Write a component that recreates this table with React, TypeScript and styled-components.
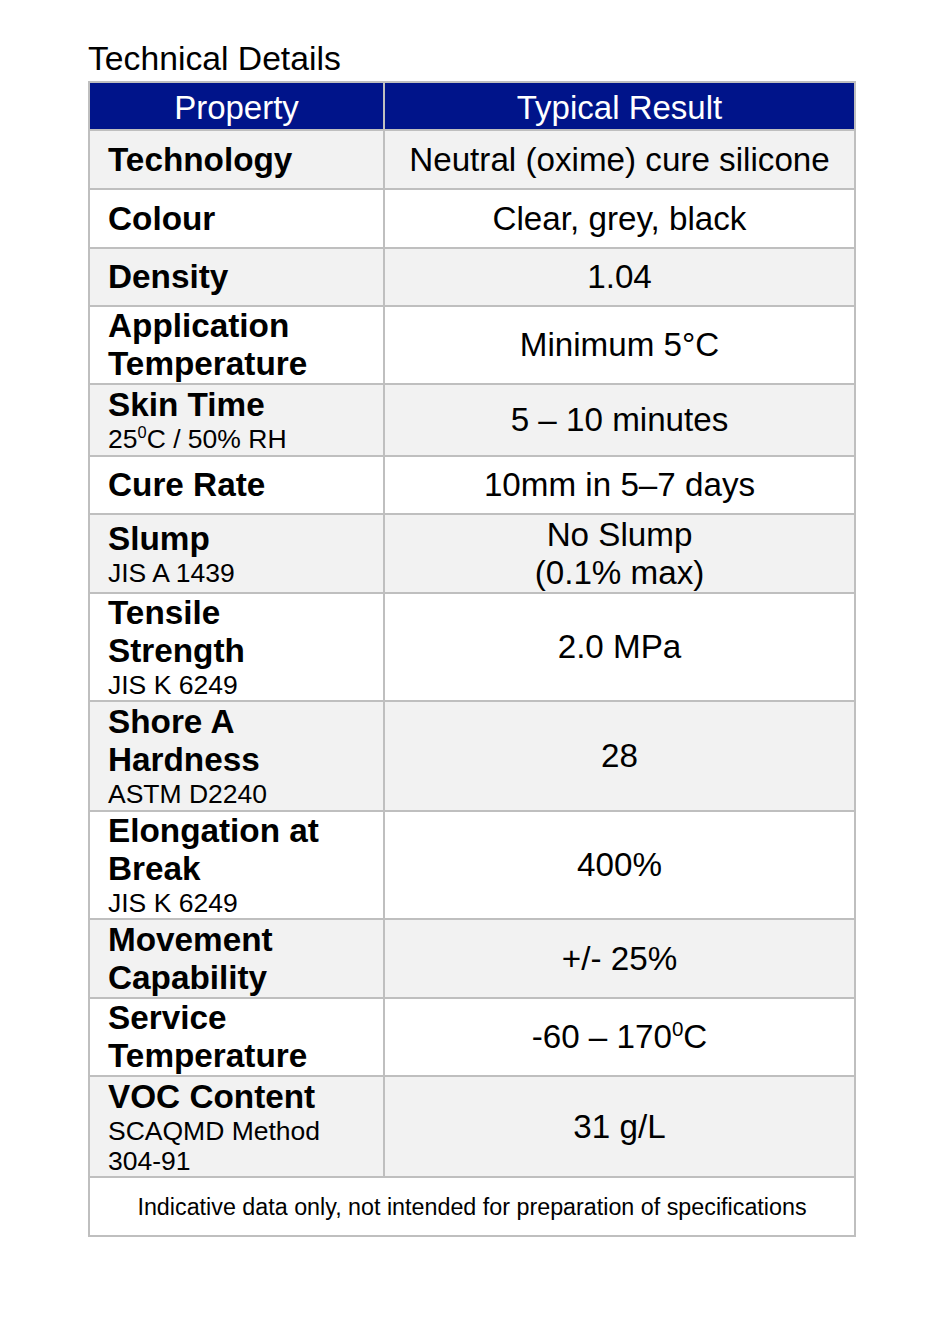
import React from "react";
import styled, { createGlobalStyle } from "styled-components";

const GlobalStyle = createGlobalStyle`
  html, body {
    margin: 0;
    padding: 0;
    background: #ffffff;
  }
  body {
    font-family: "Liberation Sans", Arial, sans-serif;
    color: #000000;
  }
`;

const Page = styled.div`
  padding: 39px 0 40px 88px;
`;

const Title = styled.h2`
  margin: 0 0 4px 0;
  padding-left: 0;
  font-size: 33.7px;
  line-height: 38px;
  font-weight: 400;
  color: #000;
`;

const Table = styled.div`
  display: grid;
  grid-template-columns: 293px 1fr;
  gap: 2px;
  padding: 2px;
  width: 768px;
  box-sizing: border-box;
  background: #bfbfbf;
`;

const HeadCell = styled.div`
  background: #00148a;
  color: #ffffff;
  height: 46px;
  box-sizing: border-box;
  padding-top: 3px;
  display: flex;
  align-items: center;
  justify-content: center;
  font-size: 33px;
  line-height: 38px;
`;

const LabelCell = styled.div<{ $h: number; $shade: boolean }>`
  min-height: ${(p) => p.$h}px;
  background: ${(p) => (p.$shade ? "#f2f2f2" : "#ffffff")};
  display: flex;
  flex-direction: column;
  justify-content: center;
  padding: 0 35px 0 18px;
  box-sizing: border-box;
`;

const Name = styled.div`
  font-size: 33.3px;
  line-height: 38px;
  font-weight: 700;
`;

const Note = styled.div`
  font-size: 26.5px;
  line-height: 30px;
  font-weight: 400;
`;

const ValueCell = styled.div<{ $h: number; $shade: boolean }>`
  min-height: ${(p) => p.$h}px;
  background: ${(p) => (p.$shade ? "#f2f2f2" : "#ffffff")};
  display: flex;
  align-items: center;
  justify-content: center;
  text-align: center;
  font-size: 33.2px;
  line-height: 38px;
`;

const Sup = styled.sup`
  font-size: 0.62em;
  vertical-align: super;
  line-height: 0;
`;

const FootCell = styled.div`
  grid-column: 1 / -1;
  background: #ffffff;
  height: 57px;
  display: flex;
  align-items: center;
  justify-content: center;
  font-size: 23.3px;
  line-height: 28px;
`;

type Row = {
  name: string;
  note?: React.ReactNode;
  value: React.ReactNode;
  h: number;
};

const rows: Row[] = [
  { name: "Technology", value: "Neutral (oxime) cure silicone", h: 57 },
  { name: "Colour", value: "Clear, grey, black", h: 57 },
  { name: "Density", value: "1.04", h: 56 },
  { name: "Application Temperature", value: "Minimum 5°C", h: 75 },
  {
    name: "Skin Time",
    note: (
      <>
        25<Sup>0</Sup>C / 50% RH
      </>
    ),
    value: "5 – 10 minutes",
    h: 70,
  },
  { name: "Cure Rate", value: "10mm in 5–7 days", h: 56 },
  {
    name: "Slump",
    note: "JIS A 1439",
    value: (
      <>
        No Slump
        <br />
        (0.1% max)
      </>
    ),
    h: 77,
  },
  { name: "Tensile Strength", note: "JIS K 6249", value: "2.0 MPa", h: 106 },
  { name: "Shore A Hardness", note: "ASTM D2240", value: "28", h: 108 },
  { name: "Elongation at Break", note: "JIS K 6249", value: "400%", h: 106 },
  { name: "Movement Capability", value: "+/- 25%", h: 77 },
  {
    name: "Service Temperature",
    value: (
      <>
        -60 – 170<Sup>0</Sup>C
      </>
    ),
    h: 76,
  },
  { name: "VOC Content", note: "SCAQMD Method 304-91", value: "31 g/L", h: 99 },
];

export default function App() {
  return (
    <>
      <GlobalStyle />
      <Page>
        <Title>Technical Details</Title>
        <Table>
          <HeadCell>Property</HeadCell>
          <HeadCell>Typical Result</HeadCell>
          {rows.map((r, i) => {
            const shade = i % 2 === 0;
            return (
              <React.Fragment key={r.name}>
                <LabelCell $h={r.h} $shade={shade}>
                  <Name>{r.name}</Name>
                  {r.note && <Note>{r.note}</Note>}
                </LabelCell>
                <ValueCell $h={r.h} $shade={shade}>
                  <span>{r.value}</span>
                </ValueCell>
              </React.Fragment>
            );
          })}
          <FootCell>
            Indicative data only, not intended for preparation of specifications
          </FootCell>
        </Table>
      </Page>
    </>
  );
}
